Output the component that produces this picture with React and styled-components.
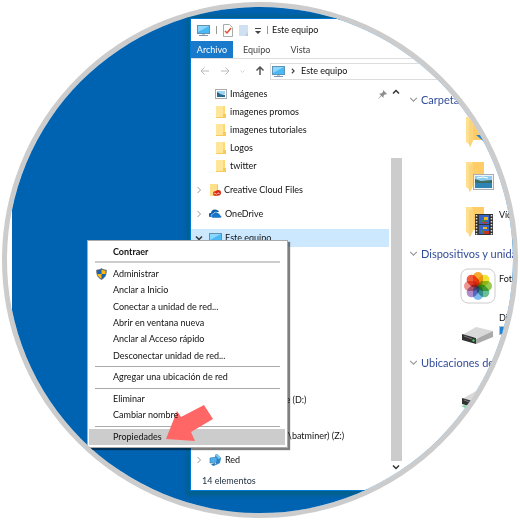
import React from 'react';
import styled, { createGlobalStyle } from 'styled-components';

const GlobalStyle = createGlobalStyle`
  * {
    box-sizing: border-box;
  }

  body {
    margin: 0;
    background: #fff;
    font-family: Lato, 'Open Sans', sans-serif;
    font-size: 9px;
    line-height: 16px;
    color: #111;
  }

  button {
    border: 0;
    padding: 0;
    background: none;
    font: inherit;
    color: inherit;
    text-align: left;
    white-space: nowrap;
  }

  svg {
    display: block;
    flex: none;
  }
`;

const Page = styled.main`
  padding: 2px;
`;

const Lens = styled.div`
  width: 100%;
  aspect-ratio: 1;
  border: 5px solid #ccc;
  border-radius: 50%;
  overflow: hidden;
  padding-left: 5px;
`;

const Desktop = styled.div`
  position: relative;
  height: 100%;
  background: #0063b1;
  padding: 12px 0 23px 179px;
`;

const Explorer = styled.section`
  display: flex;
  flex-direction: column;
  height: 100%;
  background: #fff;
  box-shadow: 0 0 0 1px #0078d7, 0 1px 3px 5px rgba(0, 95, 120, 0.6);
`;

const TitleBar = styled.header`
  display: flex;
  align-items: center;
  height: 22px;
  padding-left: 6px;
`;

const QuickAccess = styled.div`
  display: flex;
  align-items: center;
  gap: 6px;
`;

const Divider = styled.span`
  width: 1px;
  height: 8px;
  background: #999;
`;

const Title = styled.h1`
  margin: 0 0 0 4px;
  font-size: inherit;
  font-weight: 400;
`;

const Ribbon = styled.nav`
  display: flex;
  height: 18px;
  border-bottom: 1px solid #ddd;
`;

const Tab = styled.button`
  padding: 0 10px;
  background: none;
  color: #444;

  &[aria-selected='true'] {
    width: 42px;
    padding: 0;
    background: #1979ca;
    color: #fff;
    text-align: center;
  }
`;

const AddressRow = styled.div`
  display: flex;
  align-items: center;
  height: 25px;
  padding: 0 0 1px 9px;
`;

const Arrows = styled.div`
  display: flex;
  align-items: center;
  width: 70px;
  gap: 10px;
`;

const Address = styled.button`
  display: flex;
  flex: 1;
  align-items: center;
  gap: 5px;
  height: 17px;
  padding-left: 1px;
  border: 1px solid #ddd;
`;

const Body = styled.div`
  display: flex;
  flex: 1;
  min-height: 0;
`;

const Tree = styled.nav`
  width: 198px;
  padding-top: 1px;
  overflow: hidden;
`;

const Branch = styled.div`
  margin-bottom: 6px;
`;

const TreeRow = styled.button`
  display: flex;
  align-items: center;
  width: 100%;
  height: 18px;
  padding: 0 2px 0 ${(props) => (props.$child ? 24 : 4)}px;
  gap: ${(props) => (props.$child ? 3 : 6)}px;
  background: ${(props) => (props.$selected ? '#cce8ff' : 'none')};
`;

const TreeLabel = styled.span`
  flex: 1;
  margin-left: ${(props) => (props.$child ? 0 : -3)}px;
`;

const Scrollbar = styled.div`
  display: flex;
  flex-direction: column;
  align-items: center;
  width: 13px;
  padding: 4px 0 2px 1px;
`;

const Thumb = styled.div`
  flex: 1;
  width: 11px;
  margin: 62px 0 2px;
  background: #ccc;
`;

const Files = styled.div`
  flex: 1;
  min-width: 0;
  padding-top: 6px;
  overflow: hidden;
  white-space: nowrap;
`;

const GroupTitle = styled.h2`
  display: flex;
  align-items: center;
  gap: 3px;
  height: 19px;
  margin: 0;
  padding-left: 7px;
  font-size: 11px;
  font-weight: 400;
  color: #334c99;
`;

const File = styled.div`
  display: flex;
  height: 45px;
  gap: 3px;
  padding-left: 58px;
`;

const FileIcon = styled.div`
  display: grid;
  flex: none;
  place-items: center;
  width: 36px;
`;

const FileText = styled.div`
  flex: none;
  padding-top: ${(props) => (props.$meter ? 2 : 8)}px;
`;

const Meter = styled.div`
  width: 60px;
  height: 9px;
  border: 1px solid #bbb;
  background: linear-gradient(90deg, #1f84d6 60%, #e6e6e6 60%);
`;

const StatusBar = styled.footer`
  height: 17px;
  padding-left: 11px;
  color: #234;
`;

const Menu = styled.div`
  position: absolute;
  top: 233px;
  left: 75px;
  display: flex;
  flex-direction: column;
  width: 201px;
  height: 208px;
  padding: 3px 2px 2px 1px;
  border: 1px solid #aaa;
  background: #fff;
  box-shadow: 2px 2px 1px rgba(0, 0, 0, 0.5);
`;

const MenuItem = styled.button`
  display: flex;
  flex: 1;
  align-items: center;
  padding-left: 7px;
  gap: 6px;
  background: ${(props) => (props.$active ? '#ccc' : 'none')};
  font-weight: ${(props) => (props.$bold ? 700 : 400)};
`;

const MenuIcon = styled.span`
  width: 11px;
`;

const MenuLabel = styled.span`
  position: relative;
  z-index: 2;
`;

const Separator = styled.hr`
  width: 185px;
  height: ${(props) => (props.$thick ? 2 : 1)}px;
  margin: ${(props) => (props.$thick ? '1px 0 2px 6px' : '2px 0 2px 6px')};
  border: 0;
  background: ${(props) => (props.$thick ? '#ccc' : '#aaa')};
`;

const Pointer = styled.svg`
  position: absolute;
  top: 397px;
  left: 153px;
  z-index: 1;
`;

const Monitor = ({ size = 13 }) => (
  <svg width={size} height={size} viewBox="0 0 13 13">
    <rect x="0.5" y="1.5" width="12" height="8" fill="#49b8f5" stroke="#5f93b5" />
    <path d="M1 2h11L1 8z" fill="#8bd7fd" />
    <path d="M5 10h3v1H5z" fill="#bcc" />
    <path d="M2 11h9v1H2z" fill="#7f93b5" />
  </svg>
);

const Folder = () => (
  <svg width="12" height="14" viewBox="0 0 12 14">
    <path d="M1 1h9v9h1v3H1z" fill="#ffd973" />
    <path d="M1 1h7v11H1z" fill="#ffe699" />
    <path d="M8 9h3v4H1v-1h7z" fill="#f8c95b" />
  </svg>
);

const Picture = () => (
  <svg width="12" height="12" viewBox="0 0 12 12">
    <rect x="0.5" y="1.5" width="11" height="9" fill="#fff" stroke="#aaa" />
    <path d="M2 3h8v3H2z" fill="#9bd3f5" />
    <path d="M2 5l3 1 5 1v2H2z" fill="#246a94" />
    <path d="M2 4l3 2H2z" fill="#355" />
  </svg>
);

const CreativeCloud = () => (
  <svg width="12" height="14" viewBox="0 0 12 14">
    <path d="M1 1h8v12H1z" fill="#ffe08a" />
    <path d="M8 2h1v10H8z" fill="#f2c766" />
    <circle cx="6.500" cy="10.500" r="2.500" fill="#e33b22" />
    <circle cx="9.200" cy="9.700" r="2.800" fill="#d92b16" />
    <path d="M5 11c1-2 2 1 3 0s2-2 2 0" fill="none" stroke="#fff" strokeWidth="0.700" />
  </svg>
);

const OneDrive = () => (
  <svg width="13" height="12" viewBox="0 0 13 12">
    <path d="M1 9a2 2 0 0 1 1-4 4 4 0 0 1 6-3 3 3 0 0 1 2 2H6L3 9z" fill="#0b5cab" />
    <path d="M4 10a2 2 0 0 1 0-4 3 3 0 0 1 5-1 2 2 0 0 1 2 2 2 2 0 0 1 1 3z" fill="#1976c5" stroke="#fff" strokeWidth="0.500" />
  </svg>
);

const Network = () => (
  <svg width="13" height="12" viewBox="0 0 13 12">
    <path d="M6 1l2-1 4 4-1 5-4 2z" fill="#2f86c9" />
    <path d="M6 1l2-1 4 4-3 1z" fill="#7cc6f2" />
    <path d="M1 4l7-1v5l-7 1z" fill="#51aee8" stroke="#2474ad" strokeWidth="0.600" />
    <path d="M2 10l4-1 1 2-3 1z" fill="#2b7ab5" />
  </svg>
);

const Drive = () => (
  <svg width="13" height="12" viewBox="0 0 13 12">
    <path d="M2 3h9l1 4H1z" fill="#ddd" />
    <path d="M1 7h11v3H1z" fill="#555" />
  </svg>
);

const Shield = () => (
  <svg width="11" height="12" viewBox="0 0 11 12">
    <path d="M5.500 0.500C4 2 2 2 0.700 2c0 4 0.300 7 4.800 9.500C10 9 10.300 6 10.300 2 9 2 7 2 5.500 0.500z" fill="#1b62ad" stroke="#666" strokeWidth="0.800" />
    <path d="M5.500 1.300C7 2.300 8.500 2.600 9.600 2.600V6H5.500z" fill="#fdb813" />
    <path d="M5.500 6v4.700C3 9.400 1.600 8 1.500 6z" fill="#fdb813" />
  </svg>
);

const Chevron = ({ dir = 'right', size = 7, color = '#999', weight = 1 }) => {
  const turn = { right: 0, down: 90, left: 180, up: 270 }[dir];
  return (
    <svg width={size} height={size} viewBox="0 0 8 8">
      <path d="M2.500 1L5.500 4 2.500 7" transform={`rotate(${turn} 4 4)`} fill="none" stroke={color} strokeWidth={weight} />
    </svg>
  );
};

const LongArrow = ({ dir, color }) => (
  <svg width="10" height="10" viewBox="0 0 10 10">
    <path
      d="M1 5h8M4.500 1.500L1 5l3.500 3.500"
      transform={`rotate(${{ left: 0, up: 90, right: 180 }[dir]} 5 5)`}
      fill="none"
      stroke={color}
      strokeWidth={dir === 'up' ? 1.5 : 1}
    />
  </svg>
);

const Pin = () => (
  <svg width="9" height="9" viewBox="0 0 9 9">
    <path d="M5 0l4 4-1 0.500-1-0.300-1.500 1.500V8L3.500 6 0.500 8.800 0.200 8.500 3 5.500 1 3.500h2.300L5 2z" fill="#8c8c8c" />
  </svg>
);

const BigFolder = ({ kind }) => (
  <svg width="34" height="34" viewBox="0 0 34 34">
    <path d="M10 2h13v23H10z" fill="#ffcc66" />
    <path d="M5 2h6l1 2v22l-2 5-5-4z" fill="#ffe08f" />
    <path d="M8 6l4-3v22l-3 7-1-1z" fill="#fbd47c" />
    {kind === 'download' && <path d="M15 20h12v10z" fill="#1f84d6" />}
    {kind === 'pictures' && (
      <g>
        <rect x="12.500" y="14.500" width="20" height="15" fill="#f4f4f4" stroke="#a5b0b5" />
        <path d="M14 16h17v6H14z" fill="#8ecbf0" />
        <path d="M14 19l6 2 11-1v3H14z" fill="#3d6c60" />
        <path d="M14 23h17v5H14z" fill="#2e85b5" />
        <path d="M16 18l6-1 5 1" fill="none" stroke="#fff" />
      </g>
    )}
    {kind === 'videos' && (
      <g>
        <path d="M14 9h18v21H14z" fill="#333" />
        <path d="M18 10h10v9H18zM18 20h10v9H18z" fill="#3865c4" />
        <path d="M15.500 10v20M30.500 10v20" stroke="#ddd" strokeWidth="1.500" strokeDasharray="1.500 1.500" />
        <path d="M23 12h4v3h-4zM22 22h4v2h-4z" fill="#e6b81e" />
        <path d="M20 17h7l-3 2zM23 26h5v3h-5z" fill="#c33524" />
        <path d="M21 15h3v2h-3zM20 25h3v3h-3z" fill="#3c8a45" />
      </g>
    )}
  </svg>
);

const petals = ['#f7a11a', '#f0e01f', '#8cc63f', '#55b88a', '#6db4ee', '#a681c4', '#ea8a86', '#ee4b2b'];

const Photos = () => (
  <svg width="36" height="36" viewBox="0 0 36 36">
    <rect x="1" y="1" width="34" height="34" rx="7" fill="#fff" stroke="#ccc" />
    {petals.map((color, i) => (
      <rect
        key={color}
        x="13"
        y="4"
        width="10"
        height="14"
        rx="5"
        fill={color}
        fillOpacity="0.900"
        transform={`rotate(${i * 45} 18 18)`}
        style={{ mixBlendMode: 'multiply' }}
      />
    ))}
  </svg>
);

const BigDrive = ({ network }) => (
  <svg width="34" height="34" viewBox="0 0 34 34">
    <path d="M1 21L15 13l17 4-15 7z" fill="#d9d9d9" />
    <path d="M15 25l17-8v6l-17 7z" fill="#aaa" />
    <path d="M1 20l14 4v6L1 26z" fill="#333" />
    <path d="M3 22l8 3" stroke="#777" />
    <circle cx="12.500" cy="26.500" r="1.200" fill="#3fd15b" />
    {network && <path d="M0 28l4-1 8 3-2 3z" fill="#7fd8a0" />}
  </svg>
);

const Check = () => (
  <svg width="10" height="13" viewBox="0 0 10 13">
    <path d="M0.500 0.500h6l3 3v9h-9z" fill="#fff" stroke="#aaa" />
    <path d="M2 7l2 2 4-5" fill="none" stroke="#e2502a" strokeWidth="1.500" />
  </svg>
);

const BlankPage = () => (
  <svg width="10" height="13" viewBox="0 0 10 13">
    <path d="M0 1h9v11H0z" fill="#cfe0f3" />
    <path d="M9 8v4H6z" fill="#b8cbe0" />
  </svg>
);

const quickItems = [
  { name: 'Imágenes', icon: <Picture />, pinned: true },
  { name: 'imagenes promos', icon: <Folder /> },
  { name: 'imagenes tutoriales', icon: <Folder /> },
  { name: 'Logos', icon: <Folder /> },
  { name: 'twitter', icon: <Folder /> },
];

const computerItems = [
  { name: 'Descargas', icon: <Folder /> },
  { name: 'Documentos', icon: <Folder /> },
  { name: 'Escritorio', icon: <Folder /> },
  { name: 'Imágenes', icon: <Folder /> },
  { name: 'Música', icon: <Folder /> },
  { name: 'Vídeos', icon: <Folder /> },
  { name: 'Fotos', icon: <Drive /> },
  { name: 'Disco (C:)', icon: <Drive /> },
  { name: 'My big Storage (D:)', icon: <Drive /> },
  { name: 'Unidad de CD.', icon: <Drive /> },
  { name: 'Datos miner (\\\\batminer) (Z:)', icon: <Drive /> },
];

const groups = [
  {
    title: 'Carpetas',
    files: [
      { icon: <BigFolder kind="download" /> },
      { icon: <BigFolder kind="pictures" /> },
      { name: 'Vídeos', icon: <BigFolder kind="videos" /> },
    ],
  },
  {
    title: 'Dispositivos y unidades',
    files: [
      { name: 'Fotos', icon: <Photos /> },
      { name: 'Disco local', icon: <BigDrive />, meter: true },
    ],
  },
  {
    title: 'Ubicaciones de red',
    files: [{ icon: <BigDrive network /> }],
  },
];

const menuItems = [
  { label: 'Contraer', bold: true },
  { separator: true, thick: true },
  { label: 'Administrar', icon: <Shield /> },
  { label: 'Anclar a Inicio' },
  { label: 'Conectar a unidad de red...' },
  { label: 'Abrir en ventana nueva' },
  { label: 'Anclar al Acceso rápido' },
  { label: 'Desconectar unidad de red...' },
  { separator: true },
  { label: 'Agregar una ubicación de red' },
  { separator: true },
  { label: 'Eliminar' },
  { label: 'Cambiar nombre' },
  { separator: true },
  { label: 'Propiedades', active: true },
];

const TreeChild = ({ item }) => (
  <TreeRow $child>
    {item.icon}
    <TreeLabel $child>{item.name}</TreeLabel>
    {item.pinned && <Pin />}
  </TreeRow>
);

const TreeRoot = ({ name, icon, open }) => (
  <TreeRow $selected={open}>
    <Chevron dir={open ? 'down' : 'right'} size={8} color={open ? '#333' : '#999'} weight={open ? 1.5 : 1} />
    {icon}
    <TreeLabel>{name}</TreeLabel>
  </TreeRow>
);

const ContextMenu = () => (
  <Menu role="menu">
    {menuItems.map((item, i) =>
      item.separator ? (
        <Separator key={i} $thick={item.thick} />
      ) : (
        <MenuItem key={i} role="menuitem" $bold={item.bold} $active={item.active}>
          <MenuIcon>{item.icon}</MenuIcon>
          <MenuLabel>{item.label}</MenuLabel>
        </MenuItem>
      )
    )}
  </Menu>
);

const App = () => (
  <Page>
    <GlobalStyle />
    <Lens>
      <Desktop>
        <Explorer>
          <TitleBar>
            <QuickAccess>
              <Monitor />
              <Divider />
              <Check />
              <BlankPage />
              <svg width="6" height="7" viewBox="0 0 6 7">
                <path d="M0 1h6v1H0zM0 4h6L3 7z" fill="#444" />
              </svg>
              <Divider />
            </QuickAccess>
            <Title>Este equipo</Title>
          </TitleBar>
          <Ribbon role="tablist">
            <Tab role="tab" aria-selected="true">Archivo</Tab>
            <Tab role="tab">Equipo</Tab>
            <Tab role="tab">Vista</Tab>
          </Ribbon>
          <AddressRow>
            <Arrows>
              <LongArrow dir="left" color="#bbb" />
              <LongArrow dir="right" color="#bbb" />
              <Chevron dir="down" size={5} color="#bbb" />
              <LongArrow dir="up" color="#555" />
            </Arrows>
            <Address>
              <Monitor />
              <Chevron size={6} color="#444" weight={1.5} />
              Este equipo
            </Address>
          </AddressRow>
          <Body>
            <Tree>
              <Branch>
                {quickItems.map((item) => (
                  <TreeChild key={item.name} item={item} />
                ))}
              </Branch>
              <Branch>
                <TreeRoot name="Creative Cloud Files" icon={<CreativeCloud />} />
              </Branch>
              <Branch>
                <TreeRoot name="OneDrive" icon={<OneDrive />} />
              </Branch>
              <Branch>
                <TreeRoot name="Este equipo" icon={<Monitor />} open />
                {computerItems.map((item) => (
                  <TreeChild key={item.name} item={item} />
                ))}
              </Branch>
              <TreeRoot name="Red" icon={<Network />} />
            </Tree>
            <Scrollbar>
              <Chevron dir="up" size={8} color="#333" weight={1.5} />
              <Thumb />
              <Chevron dir="down" size={8} color="#333" weight={1.5} />
            </Scrollbar>
            <Files>
              {groups.map((group) => (
                <section key={group.title}>
                  <GroupTitle>
                    <Chevron dir="down" size={9} />
                    {group.title}
                  </GroupTitle>
                  {group.files.map((file, i) => (
                    <File key={i}>
                      <FileIcon>{file.icon}</FileIcon>
                      <FileText $meter={file.meter}>
                        {file.name}
                        {file.meter && <Meter />}
                      </FileText>
                    </File>
                  ))}
                </section>
              ))}
            </Files>
          </Body>
          <StatusBar>14 elementos</StatusBar>
        </Explorer>
        <ContextMenu />
        <Pointer width="50" height="40" viewBox="0 0 50 40">
          <path d="M1 35L12 7l4 6 23-12 9 14-22 13 4 9z" fill="#f66" />
        </Pointer>
      </Desktop>
    </Lens>
  </Page>
);

export default App;
